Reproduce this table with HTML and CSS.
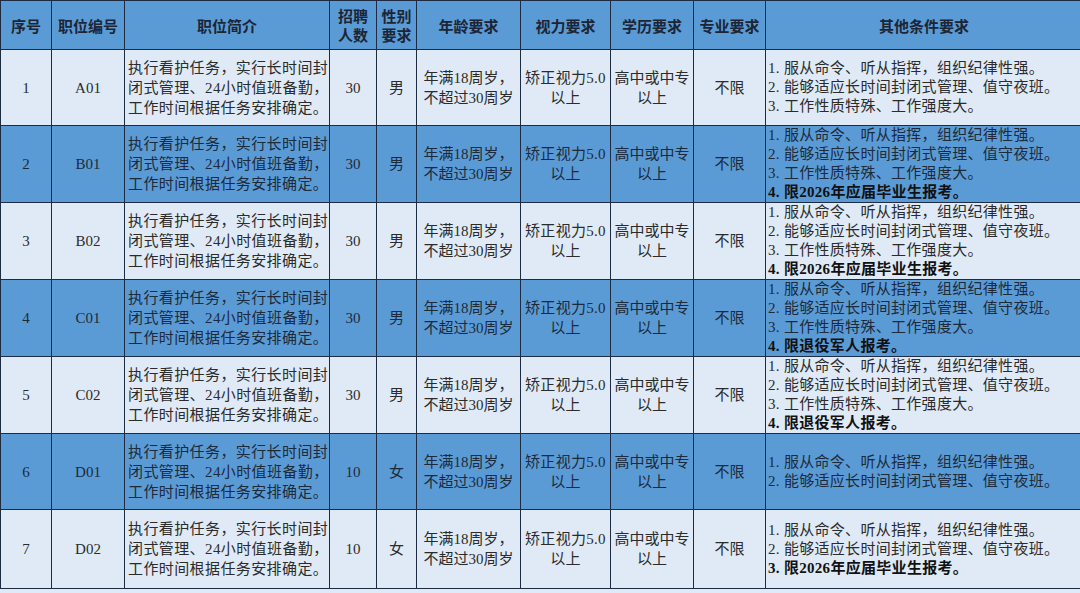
FILE: index.html
```html
<!DOCTYPE html>
<html lang="zh">
<head>
<meta charset="utf-8">
<link rel="stylesheet" href="styles.css">
</head>
<body>
<table class="jobs">
  <colgroup>
    <col class="c1"><col class="c2"><col class="c3"><col class="c4"><col class="c5">
    <col class="c6"><col class="c7"><col class="c8"><col class="c9"><col class="c10">
  </colgroup>
  <thead>
    <tr>
      <th>序号</th><th>职位编号</th><th>职位简介</th><th>招聘<br>人数</th><th>性别<br>要求</th>
      <th>年龄要求</th><th>视力要求</th><th>学历要求</th><th>专业要求</th><th>其他条件要求</th>
    </tr>
  </thead>
  <tbody>
    <tr class="light">
      <td>1</td><td class="num">A01</td>
      <td class="desc">执行看护任务，实行长时间封<br>闭式管理、24小时值班备勤，<br>工作时间根据任务安排确定。</td>
      <td class="num">30</td><td>男</td>
      <td>年满18周岁，<br>不超过30周岁</td><td class="eye">矫正视力5.0<br>以上</td><td>高中或中专<br>以上</td><td>不限</td>
      <td class="other">1. 服从命令、听从指挥，组织纪律性强。<br>2. 能够适应长时间封闭式管理、值守夜班。<br>3. 工作性质特殊、工作强度大。</td>
    </tr>
    <tr class="dark">
      <td>2</td><td class="num">B01</td>
      <td class="desc">执行看护任务，实行长时间封<br>闭式管理、24小时值班备勤，<br>工作时间根据任务安排确定。</td>
      <td class="num">30</td><td>男</td>
      <td>年满18周岁，<br>不超过30周岁</td><td class="eye">矫正视力5.0<br>以上</td><td>高中或中专<br>以上</td><td>不限</td>
      <td class="other">1. 服从命令、听从指挥，组织纪律性强。<br>2. 能够适应长时间封闭式管理、值守夜班。<br>3. 工作性质特殊、工作强度大。<br><b>4. 限2026年应届毕业生报考。</b></td>
    </tr>
    <tr class="light">
      <td>3</td><td class="num">B02</td>
      <td class="desc">执行看护任务，实行长时间封<br>闭式管理、24小时值班备勤，<br>工作时间根据任务安排确定。</td>
      <td class="num">30</td><td>男</td>
      <td>年满18周岁，<br>不超过30周岁</td><td class="eye">矫正视力5.0<br>以上</td><td>高中或中专<br>以上</td><td>不限</td>
      <td class="other">1. 服从命令、听从指挥，组织纪律性强。<br>2. 能够适应长时间封闭式管理、值守夜班。<br>3. 工作性质特殊、工作强度大。<br><b>4. 限2026年应届毕业生报考。</b></td>
    </tr>
    <tr class="dark">
      <td>4</td><td class="num">C01</td>
      <td class="desc">执行看护任务，实行长时间封<br>闭式管理、24小时值班备勤，<br>工作时间根据任务安排确定。</td>
      <td class="num">30</td><td>男</td>
      <td>年满18周岁，<br>不超过30周岁</td><td class="eye">矫正视力5.0<br>以上</td><td>高中或中专<br>以上</td><td>不限</td>
      <td class="other">1. 服从命令、听从指挥，组织纪律性强。<br>2. 能够适应长时间封闭式管理、值守夜班。<br>3. 工作性质特殊、工作强度大。<br><b>4. 限退役军人报考。</b></td>
    </tr>
    <tr class="light">
      <td>5</td><td class="num">C02</td>
      <td class="desc">执行看护任务，实行长时间封<br>闭式管理、24小时值班备勤，<br>工作时间根据任务安排确定。</td>
      <td class="num">30</td><td>男</td>
      <td>年满18周岁，<br>不超过30周岁</td><td class="eye">矫正视力5.0<br>以上</td><td>高中或中专<br>以上</td><td>不限</td>
      <td class="other">1. 服从命令、听从指挥，组织纪律性强。<br>2. 能够适应长时间封闭式管理、值守夜班。<br>3. 工作性质特殊、工作强度大。<br><b>4. 限退役军人报考。</b></td>
    </tr>
    <tr class="dark">
      <td>6</td><td class="num">D01</td>
      <td class="desc">执行看护任务，实行长时间封<br>闭式管理、24小时值班备勤，<br>工作时间根据任务安排确定。</td>
      <td class="num">10</td><td>女</td>
      <td>年满18周岁，<br>不超过30周岁</td><td class="eye">矫正视力5.0<br>以上</td><td>高中或中专<br>以上</td><td>不限</td>
      <td class="other">1. 服从命令、听从指挥，组织纪律性强。<br>2. 能够适应长时间封闭式管理、值守夜班。</td>
    </tr>
    <tr class="light last">
      <td>7</td><td class="num">D02</td>
      <td class="desc">执行看护任务，实行长时间封<br>闭式管理、24小时值班备勤，<br>工作时间根据任务安排确定。</td>
      <td class="num">10</td><td>女</td>
      <td>年满18周岁，<br>不超过30周岁</td><td class="eye">矫正视力5.0<br>以上</td><td>高中或中专<br>以上</td><td>不限</td>
      <td class="other">1. 服从命令、听从指挥，组织纪律性强。<br>2. 能够适应长时间封闭式管理、值守夜班。<br><b>3. 限2026年应届毕业生报考。</b></td>
    </tr>
  </tbody>
</table>
</body>
</html>
```

FILE: styles.css
```css
html, body {
  margin: 0;
  padding: 0;
  background: #dfeaf6;
  overflow: hidden;
}

.jobs {
  width: 1082px;
  table-layout: fixed;
  border-collapse: collapse;
  font-family: "Liberation Serif", "Noto Sans CJK SC", serif;
  font-size: 15px;
  color: #2b2b2b;
}

.c1 { width: 51px; }
.c2 { width: 73px; }
.c3 { width: 205px; }
.c4 { width: 47px; }
.c5 { width: 40px; }
.c6 { width: 104px; }
.c7 { width: 90px; }
.c8 { width: 83px; }
.c9 { width: 72px; }
.c10 { width: 317px; }

.jobs th,
.jobs td {
  border: 1.5px solid #1d2c42;
  padding: 0 2px;
  text-align: center;
  vertical-align: middle;
  white-space: nowrap;
  overflow: hidden;
}

.jobs th {
  height: 48px;
  background: #5b9bd5;
  font-family: "Noto Sans CJK SC", sans-serif;
  font-weight: 700;
  font-size: 15px;
  line-height: 19px;
  color: #1b2536;
}

.jobs td {
  height: 75px;
  line-height: 20px;
}

.jobs tr.last td {
  height: 78px;
}

.jobs tr.light td {
  background: #dfeaf6;
}

.jobs tr.dark td {
  background: #5b9bd5;
  color: #1c2a3b;
}

.jobs td.desc {
  text-align: left;
  padding-left: 3px;
  letter-spacing: 0.4px;
}

.jobs td.eye {
  letter-spacing: 0.3px;
}

.jobs td.other {
  text-align: left;
  padding-left: 2px;
  line-height: 19px;
  letter-spacing: 0.3px;
}

.jobs td.other b {
  font-weight: 700;
  color: #111;
}
```
